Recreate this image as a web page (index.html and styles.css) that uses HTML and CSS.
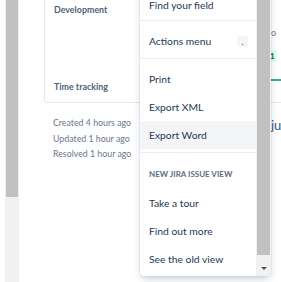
FILE: index.html
```html
<!DOCTYPE html>
<html lang="en">
  <head>
    <meta charset="UTF-8" />
    <meta name="viewport" content="width=device-width, initial-scale=1.0" />
    <title>Issue actions</title>
    <link rel="stylesheet" href="styles.css">
  </head>
  <body>
    <div class="page">
      <div class="side-scroll"><div class="side-thumb"></div></div>

      <main class="issue">
        <section class="card">
          <div class="card-left">
            <h3 class="field-label">Development</h3>
            <h3 class="field-label time-label">Time tracking</h3>
          </div>
          <div class="card-right">
            <span class="dev-text">o</span>
            <span class="lozenge">1</span>
            <span class="progress"></span>
          </div>
        </section>

        <div class="meta-row">
          <div class="dates">
            <p>Created 4 hours ago</p>
            <p>Updated 1 hour ago</p>
            <p>Resolved 1 hour ago</p>
          </div>
          <span class="configure">ju</span>
        </div>
      </main>
    </div>

    <div class="dropdown">
      <div class="menu-list">
        <div class="menu-group first">
          <div class="menu-item">Find your field</div>
        </div>
        <div class="menu-group">
          <div class="menu-item">Actions menu <span class="kbd">.</span></div>
        </div>
        <div class="menu-group">
          <div class="menu-item">Print</div>
          <div class="menu-item">Export XML</div>
          <div class="menu-item active">Export Word</div>
        </div>
        <div class="menu-group">
          <div class="menu-heading">New Jira issue view</div>
          <div class="menu-item">Take a tour</div>
          <div class="menu-item">Find out more</div>
          <div class="menu-item">See the old view</div>
        </div>
      </div>
      <div class="menu-scroll">
        <div class="menu-thumb"></div>
        <div class="scroll-btn"><span class="arrow-down"></span></div>
      </div>
    </div>
  </body>
</html>
```

FILE: styles.css
```css
body {
  font-family: Lato, "Noto Sans", sans-serif;
  margin: 0;
  padding: 0;
  background: #fff;
  overflow: hidden;
}

.page {
  display: flex;
  height: 282px;
  padding-left: 5px;
  overflow: hidden;
}

/* left panel scrollbar */
.side-scroll {
  flex: none;
  width: 14px;
  height: 282px;
  background: #f1f1f1;
}

.side-thumb {
  width: 12px;
  height: 197px;
  margin-left: 1px;
  background: #c1c1c1;
}

.issue {
  flex: 1;
  min-width: 0;
  padding-left: 25px;
}

.card {
  display: flex;
  width: 300px;
  margin-top: -12px;
  padding-left: 9px;
  border: 1px solid #e4e6eb;
  border-radius: 3px;
}

.card-left {
  flex: none;
  width: 217px;
  padding: 13px 0 7px;
}

.field-label {
  margin: 0;
  font-size: 8.9px;
  line-height: 16px;
  font-weight: 700;
  color: #505f79;
}

.time-label {
  margin-top: 61px;
}

.card-right {
  display: flex;
  flex-direction: column;
  align-items: flex-start;
  padding-top: 37px;
}

.dev-text {
  font-size: 9px;
  line-height: 14px;
  color: #6b778c;
}

.lozenge {
  margin: 10px 0 0 -3px;
  height: 12px;
  padding: 0 2px;
  border-radius: 2px;
  background: #e3fcef;
  color: #006644;
  font-size: 8px;
  font-weight: 700;
  line-height: 12px;
}

.progress {
  width: 40px;
  height: 2px;
  margin-top: 17px;
  background: #36b37e;
}

.meta-row {
  display: flex;
  margin-top: 12px;
}

.dates {
  flex: none;
  width: 218px;
  padding-left: 9px;
}

.dates p {
  margin: 0;
  font-size: 8.8px;
  line-height: 15.5px;
  color: #6b778c;
}

.configure {
  margin-top: 2px;
  font-size: 13px;
  color: #42526e;
}

/* dropdown menu */
.dropdown {
  position: absolute;
  left: 140px;
  top: -15px;
  display: flex;
  width: 131px;
  height: 291px;
  background: #fff;
  border-radius: 3px;
  box-shadow: 0 4px 8px -2px rgba(9, 30, 66, 0.25), 0 0 1px rgba(9, 30, 66, 0.31);
  overflow: hidden;
}

.menu-list {
  flex: 1;
}

.menu-group {
  padding: 6px 0 3px;
  border-top: 1px solid #ebecf0;
}

.menu-group.first {
  padding-bottom: 1px;
  border-top: none;
}

.menu-item {
  display: flex;
  align-items: center;
  height: 28px;
  padding: 0 8px 0 9px;
  font-size: 10.3px;
  color: #253858;
}

.menu-item.active {
  background: #f4f5f7;
}

.kbd {
  display: flex;
  align-items: center;
  justify-content: center;
  width: 11px;
  height: 11px;
  margin-left: auto;
  border-radius: 2px;
  background: #f4f5f7;
  font-size: 9px;
  line-height: 11px;
  color: #42526e;
}

.menu-heading {
  display: flex;
  align-items: center;
  height: 30px;
  padding: 0 9px;
  font-size: 8px;
  font-weight: 700;
  text-transform: uppercase;
  color: #5e6c84;
}

.menu-scroll {
  display: flex;
  flex-direction: column;
  flex: none;
  width: 15px;
  background: #f1f1f1;
}

.menu-thumb {
  flex: 1;
  margin: 0 1px 6px;
  background: #c1c1c1;
}

.scroll-btn {
  display: flex;
  align-items: center;
  justify-content: center;
  height: 15px;
}

.arrow-down {
  width: 0;
  height: 0;
  border-left: 3px solid transparent;
  border-right: 3px solid transparent;
  border-top: 3px solid #505050;
}
```
